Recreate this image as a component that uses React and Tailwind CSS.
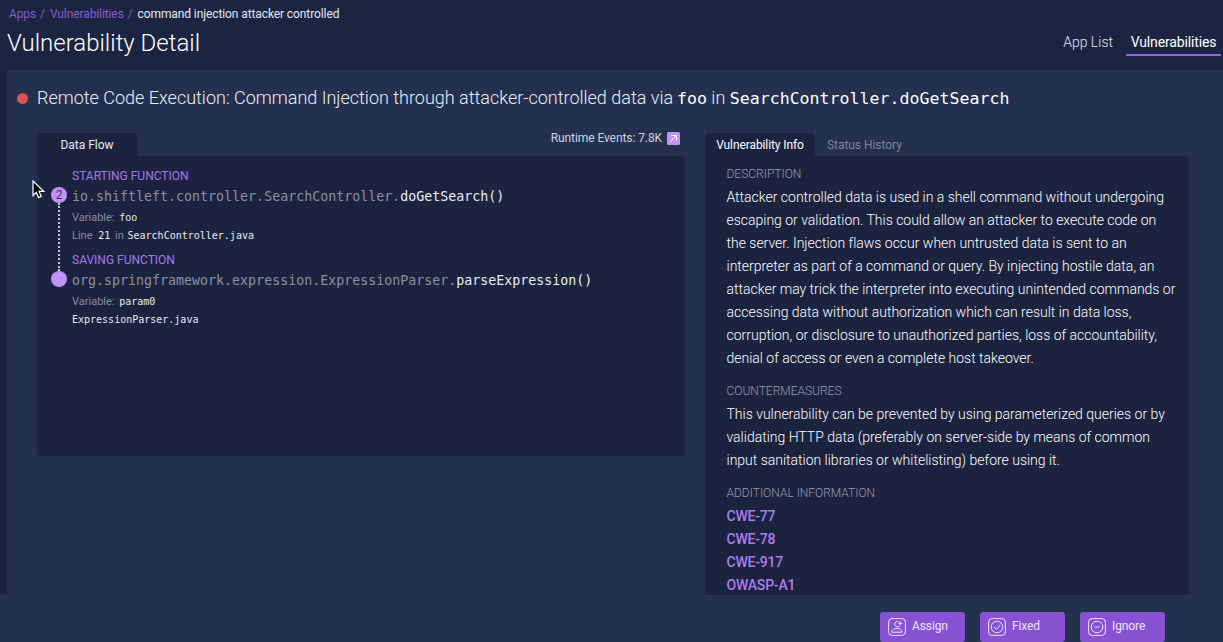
const mono = "font-['DejaVu_Sans_Mono',monospace]";

function Assign() {
  return (
    <svg className="size-[18px]" viewBox="0 0 18 18" fill="none" stroke="currentColor" strokeWidth="1">
      <rect x="0.6" y="0.6" width="16.8" height="16.8" rx="3.5" />
      <path d="M10.200 3.700a2.700 2.700 0 1 0 1.300 4.200M3.800 14.200c0-2.400 2-3.700 5.100-3.700s5.200 1.300 5.200 3.700zM12.200 3.300v4M10.200 5.300h4" />
    </svg>
  );
}
function Fixed() {
  return (
    <svg className="size-[18px]" viewBox="0 0 18 18" fill="none" stroke="currentColor" strokeWidth="1">
      <rect x="0.6" y="0.6" width="16.8" height="16.8" rx="3.5" />
      <circle cx="9" cy="9" r="5.8" />
      <path d="M6 9l2.300 2.300L12.300 7" />
    </svg>
  );
}
function Ignore() {
  return (
    <svg className="size-[18px]" viewBox="0 0 18 18" fill="none" stroke="currentColor" strokeWidth="1">
      <rect x="0.6" y="0.6" width="16.8" height="16.8" rx="3.5" />
      <circle cx="9" cy="9" r="5.8" />
      <path d="M6.5 9h5" />
    </svg>
  );
}

function Action({ icon, label }) {
  return (
    <button className="flex h-[30px] w-[85px] items-center gap-[6px] rounded-[3px] bg-[#8853d3] pl-2 text-[12px] text-[#ece2fb]">
      {icon}
      <span className="whitespace-nowrap pb-[2px] tracking-[-0.1px]">{label}</span>
    </button>
  );
}

const description = [
  "Attacker controlled data is used in a shell command without undergoing",
  "escaping or validation. This could allow an attacker to execute code on",
  "the server. Injection flaws occur when untrusted data is sent to an",
  "interpreter as part of a command or query. By injecting hostile data, an",
  "attacker may trick the interpreter into executing unintended commands or",
  "accessing data without authorization which can result in data loss,",
  "corruption, or disclosure to unauthorized parties, loss of accountability,",
  "denial of access or even a complete host takeover.",
];
const countermeasures = [
  "This vulnerability can be prevented by using parameterized queries or by",
  "validating HTTP data (preferably on server-side by means of common",
  "input sanitation libraries or whitelisting) before using it.",
];
const references = ["CWE-77", "CWE-78", "CWE-917", "OWASP-A1"];

function Label({ children }) {
  return <h3 className="h-[14px] text-[12px] font-light leading-[14px] text-[#969db3]">{children}</h3>;
}
function Lines({ lines }) {
  return lines.map((line) => <p key={line} className="whitespace-nowrap">{line}</p>);
}

export default function App() {
  return (
    <div className="relative flex h-[642px] w-[1223px] flex-col overflow-hidden bg-[#1b2440] font-[Roboto,sans-serif] text-[#e6e9f2]">
      <header className="flex h-[70px] shrink-0 justify-between pl-[7px]">
        <div>
          <nav className="flex h-[28px] items-center gap-[4px] pl-[2px] text-[12px] tracking-[-0.1px] text-[#8a5ad0]">
            <span>Apps</span><span>/</span><span className="pl-px">Vulnerabilities</span><span>/</span>
            <span className="pl-px text-[#e6e9f2]">command injection attacker controlled</span>
          </nav>
          <h1 className="text-[24px] font-light leading-[30px] text-white">Vulnerability Detail</h1>
        </div>
        <nav className="flex items-start gap-[13px] pr-[2px] pt-[31px] text-[14px] leading-[23px]">
          <span className="font-light text-[#e3e7f2]">App List</span>
          <span className="h-[25px] w-[95px] border-b-2 border-[#9563e0] text-center tracking-[-0.15px] text-white">Vulnerabilities</span>
        </nav>
      </header>
      <main className="ml-[7px] h-[525px] shrink-0 overflow-hidden bg-[#23304e]">
        <h2 className="flex h-[56px] items-center pl-[10px] text-[18px] font-light whitespace-nowrap text-[#ebeff8]">
          <span className="mr-[9px] size-[11px] rounded-full bg-[#dc5350]" />
          <span>Remote Code Execution: Command Injection through attacker-controlled data via <span className={`${mono} -ml-[0.5px] text-[16.6px] font-normal text-white`}>foo</span> in <span className={`${mono} text-[16.6px] font-normal text-white`}>SearchController.doGetSearch</span></span>
        </h2>
        <div className="flex items-start gap-5 pl-[30px] pt-[7px]">
          <section className="w-[648px]">
            <div className="flex h-[23px] justify-between">
              <div className="w-[100px] rounded-t bg-[#1b233f] text-center text-[12px] leading-[24px]">Data Flow</div>
              <div className="-mt-[6px] mr-[5px] flex h-[22px] items-center gap-[5px] text-[12px] tracking-[-0.08px] text-[#cdd3e2]">
                Runtime Events: 7.8K
                <svg className="size-[13px]" viewBox="0 0 13 13" fill="none" stroke="#fff" strokeWidth="1">
                  <rect width="13" height="13" rx="1.5" fill="#c193fa" stroke="none" />
                  <path d="M3.500 9.500l6-6M4.500 3.500h5v5" />
                </svg>
              </div>
            </div>
            <div className="flex h-[300px] rounded-b rounded-tr bg-[#1b233f] pl-[14px]">
              <div className="flex w-4 flex-col items-center pt-[31px]">
                <span className="size-4 rounded-full bg-[#c193fa] text-center text-[12px] leading-4 text-[#3c2d62]">2</span>
                <span className="h-[68px] border-l-2 border-dotted border-[#c5c9d6]" />
                <span className="size-4 rounded-full bg-[#c193fa]" />
              </div>
              <div className="ml-[5px] pt-[11px] whitespace-nowrap">
                <div className="h-[84px]">
                  <p className="text-[12px] leading-[18px] text-[#a878e6]">STARTING FUNCTION</p>
                  <p className={`${mono} text-[13.3px] leading-[24px] text-[#8a90a4]`}>io.shiftleft.controller.SearchController.<span className="text-[#e9ecf4]">doGetSearch()</span></p>
                  <p className="text-[11px] leading-[18px] text-[#858ca3]">Variable: <span className={`${mono} ml-[2px] text-[10px] text-[#e9ecf4]`}>foo</span></p>
                  <p className="text-[11px] leading-[18px] text-[#858ca3]">Line <span className={`${mono} ml-[3px] mr-[2px] text-[10px] text-[#e9ecf4]`}>21</span> in <span className={`${mono} ml-px text-[10px] text-[#e9ecf4]`}>SearchController.java</span></p>
                </div>
                <div>
                  <p className="text-[12px] leading-[18px] text-[#a878e6]">SAVING FUNCTION</p>
                  <p className={`${mono} text-[13.3px] leading-[24px] text-[#8a90a4]`}>org.springframework.expression.ExpressionParser.<span className="text-[#e9ecf4]">parseExpression()</span></p>
                  <p className="text-[11px] leading-[18px] text-[#858ca3]">Variable: <span className={`${mono} ml-[2px] text-[10px] text-[#e9ecf4]`}>param0</span></p>
                  <p className={`${mono} text-[10px] leading-[18px] text-[#e9ecf4]`}>ExpressionParser.java</p>
                </div>
              </div>
            </div>
          </section>
          <section className="w-[484px]">
            <div className="flex h-[23px] text-[12px] leading-[24px]">
              <div className="w-[110px] rounded-t bg-[#1b233f] text-center tracking-[-0.1px] text-white">Vulnerability Info</div>
              <div className="ml-[12px] tracking-[-0.05px] text-[#7d849c]">Status History</div>
            </div>
            <div className="h-[500px] rounded-tr bg-[#1b233f] pl-[21.5px] pt-[11px] text-[14px] leading-[23px]">
              <Label>DESCRIPTION</Label>
              <div className="mt-[5px] font-light tracking-[-0.01px] text-white"><Lines lines={description} /></div>
              <div className="mt-[14px]"><Label>COUNTERMEASURES</Label></div>
              <div className="mt-[5px] font-light tracking-[-0.01px] text-white"><Lines lines={countermeasures} /></div>
              <div className="mt-[14px]"><Label>ADDITIONAL INFORMATION</Label></div>
              <div className="mt-[5px] font-medium tracking-[-0.2px] text-[#ad7df0]"><Lines lines={references} /></div>
            </div>
          </section>
        </div>
      </main>
      <footer className="flex h-[47px] shrink-0 justify-end gap-[15px] bg-[#23304e] pr-[58px] pt-[17px]">
        <Action icon={<Assign />} label="Assign" />
        <Action icon={<Fixed />} label="Fixed" />
        <Action icon={<Ignore />} label="Ignore" />
      </footer>
      <svg className="absolute left-[32px] top-[180px] h-[19px] w-[13px]" viewBox="0 0 13 19">
        <path d="M1 1v14.500l3.300-3.200 2.300 5.300 2.600-1.100-2.200-5.200h4.700z" fill="#000" stroke="#fff" strokeWidth="1.2" />
      </svg>
    </div>
  );
}
